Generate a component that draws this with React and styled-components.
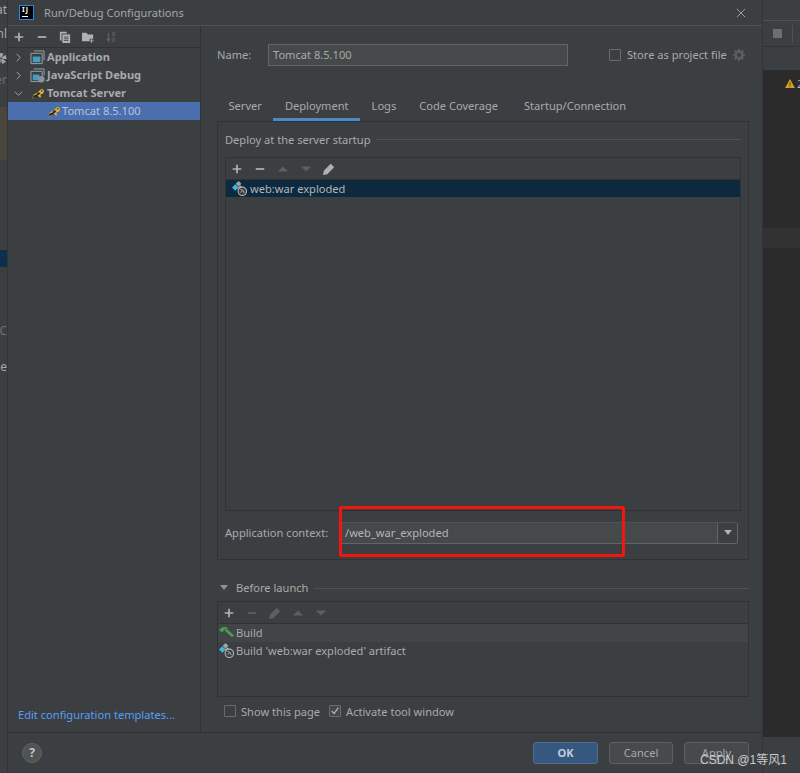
import React from 'react'
import styled, { createGlobalStyle } from 'styled-components'

const GlobalStyle = createGlobalStyle`
html, body {
  margin: 0;
  padding: 0;
  height: 100%;
  overflow: hidden;
  background: #3c3f41;
}
* { box-sizing: border-box; }
`

const Tomcat = () => (
  <IconSvg viewBox="0 0 16 16">
    <path d="M2 13l2-4 4-2 3-3 2-1 2 2-1 3-3 1 1 3-2 0-2-2-3 1-1 2z" fill="#e3ae2a" />
    <path d="M2 13l2-3 3-1 1-2 3 0-1 2-2 1 1 2-2-1-2 1z" fill="#26272a" />
    <circle cx="12.500" cy="5" r=".8" fill="#26272a" />
  </IconSvg>
)

const Artifact = () => (
  <IconSvg viewBox="0 0 16 16">
    <path d="M7 0l3 3-3 3-3-3z" fill="#9aa7b0" />
    <path d="M3.500 3.500l3.500 3.500-3.500 3.500L0 7z" fill="#40b6e0" />
    <path d="M9 4.500l3 3-3 3-3-3z" fill="#9aa7b0" />
    <circle cx="11" cy="11" r="4.500" fill="#3c3f41" stroke="#afb1b3" strokeWidth="1.200" />
    <path d="M9 9l3 1 1 3M9 12l2-1" stroke="#afb1b3" strokeWidth="1" fill="none" />
  </IconSvg>
)

const Pencil = ({ dim }) => (
  <ToolSvg viewBox="0 0 14 14" $dim={dim}>
    <path d="M0 14l1-5 8-8 4 4-8 8z" fill="currentColor" />
  </ToolSvg>
)

const Up = () => (
  <ToolSvg viewBox="0 0 14 14" $dim>
    <path d="M1 10l6-6 6 6z" fill="currentColor" />
  </ToolSvg>
)

const Down = () => (
  <ToolSvg viewBox="0 0 14 14" $dim>
    <path d="M1 4l6 6 6-6z" fill="currentColor" />
  </ToolSvg>
)

const Plus = () => (
  <ToolSvg viewBox="0 0 14 14">
    <path d="M2 7h10M7 2v10" stroke="currentColor" strokeWidth="2" />
  </ToolSvg>
)

const Minus = ({ dim }) => (
  <ToolSvg viewBox="0 0 14 14" $dim={dim}>
    <path d="M2 7h10" stroke="currentColor" strokeWidth="2" />
  </ToolSvg>
)

const App = () => {
  return (
    <Screen>
      <GlobalStyle />
      <LeftStrip>
        <StripText $h={22} $top={1}>at</StripText>
        <StripText $h={25} $top={3}>nl</StripText>
        <StripText $h={23} $top={3}>✿</StripText>
        <StripText $h={37} $top={1} $dim>er</StripText>
        <LeftBrown />
        <LeftGap $h={90} />
        <LeftBlue />
        <LeftGap $h={55} />
        <StripText $h={36} $top={0} $dim>C</StripText>
        <StripText $h={36} $top={0}>ole</StripText>
      </LeftStrip>

      <Dialog>
        <TitleBar>
          <Logo>
            <LogoText>IJ</LogoText>
            <LogoLine />
          </Logo>
          <TitleText>Run/Debug Configurations</TitleText>
          <CloseSvg viewBox="0 0 12 12">
            <path d="M1 1l10 10M11 1L1 11" stroke="#afb1b3" strokeWidth="1" />
          </CloseSvg>
        </TitleBar>

        <Body>
          <Sidebar>
            <SideTools>
              <Plus />
              <Minus />
              <ToolSvg viewBox="0 0 14 14">
                <path d="M1 1h8v2H3v8H1z" fill="currentColor" />
                <path d="M4 4h9v10H4z" fill="currentColor" />
                <path d="M6 7h5M6 9h5M6 11h5" stroke="#3c3f41" />
              </ToolSvg>
              <ToolSvg viewBox="0 0 14 14">
                <path d="M0 2h5l2 2h6v8H0z" fill="currentColor" />
                <path d="M11 9v5M8.500 11.500h5" stroke="#3c3f41" strokeWidth="3" />
                <path d="M11 9v5M8.500 11.500h5" stroke="#afb1b3" />
              </ToolSvg>
              <ToolSvg viewBox="0 0 14 14" $dim>
                <path d="M4 2v9M2 9l2 3 2-3" stroke="currentColor" strokeWidth="1.500" fill="none" />
                <path d="M8 1h4v5H8zM8 8h4v5H8z" fill="currentColor" opacity=".6" />
              </ToolSvg>
            </SideTools>
            <Tree>
              <TreeRow>
                <ArrowSvg viewBox="0 0 10 10"><path d="M3 1l4 4-4 4" stroke="#afb1b3" fill="none" /></ArrowSvg>
                <IconSvg viewBox="0 0 16 16">
                  <path d="M4 1h11v10" stroke="#9aa7b0" fill="none" />
                  <path d="M1 3.500h12v11H1z" stroke="#9aa7b0" fill="none" />
                  <path d="M3 7h8v6H3z" fill="#40a0c0" />
                </IconSvg>
                <TreeLabel>Application</TreeLabel>
              </TreeRow>
              <TreeRow>
                <ArrowSvg viewBox="0 0 10 10"><path d="M3 1l4 4-4 4" stroke="#afb1b3" fill="none" /></ArrowSvg>
                <IconSvg viewBox="0 0 16 16">
                  <path d="M4 1h11v7" stroke="#9aa7b0" fill="none" />
                  <path d="M1 3.500h12v11H1z" stroke="#9aa7b0" fill="none" />
                  <path d="M3 7h7v6H3z" fill="#40a0c0" />
                  <circle cx="12" cy="12" r="3.500" fill="#8c9296" />
                </IconSvg>
                <TreeLabel>JavaScript Debug</TreeLabel>
              </TreeRow>
              <TreeRow>
                <ArrowSvg viewBox="0 0 10 10"><path d="M1 3l4 4 4-4" stroke="#afb1b3" fill="none" /></ArrowSvg>
                <Tomcat />
                <TreeLabel>Tomcat Server</TreeLabel>
              </TreeRow>
              <SelectedRow>
                <Tomcat />
                <SelectedLabel>Tomcat 8.5.100</SelectedLabel>
              </SelectedRow>
            </Tree>
            <TemplatesLink>Edit configuration templates...</TemplatesLink>
          </Sidebar>

          <Main>
            <NameRow>
              <FieldLabel>Name:</FieldLabel>
              <NameInput>Tomcat 8.5.100</NameInput>
              <StoreWrap>
                <CheckBox />
                <CheckLabel>Store as project file</CheckLabel>
                <ToolSvg viewBox="0 0 14 14" $dim>
                  <circle cx="7" cy="7" r="4" fill="none" stroke="currentColor" strokeWidth="3" />
                  <path d="M7 0v3M7 11v3M0 7h3M11 7h3M2 2l2 2M10 10l2 2M12 2l-2 2M2 12l2-2" stroke="currentColor" strokeWidth="2" />
                </ToolSvg>
              </StoreWrap>
            </NameRow>

            <Tabs>
              <Tab>Server</Tab>
              <Tab $active>Deployment</Tab>
              <Tab>Logs</Tab>
              <Tab $extra={3}>Code Coverage</Tab>
              <Tab>Startup/Connection</Tab>
            </Tabs>

            <Panel>
              <GroupTitle>
                <span>Deploy at the server startup</span>
                <GroupLine />
              </GroupTitle>
              <ListBox>
                <ListTools>
                  <Plus />
                  <Minus />
                  <Up />
                  <Down />
                  <Pencil />
                </ListTools>
                <ArtifactRow>
                  <Artifact />
                  <span>web:war exploded</span>
                </ArtifactRow>
              </ListBox>
              <ContextRow>
                <ContextLabel>Application context:</ContextLabel>
                <ContextCombo>
                  <ContextValue>/web_war_exploded</ContextValue>
                  <ComboButton>
                    <ComboArrow viewBox="0 0 8 6"><path d="M0 0h8L4 5z" fill="#afb1b3" /></ComboArrow>
                  </ComboButton>
                </ContextCombo>
              </ContextRow>
            </Panel>

            <BeforeTitle>
              <ComboArrow viewBox="0 0 8 6"><path d="M0 0h8L4 5z" fill="#8c9296" /></ComboArrow>
              <BeforeLabel>Before launch</BeforeLabel>
              <GroupLine />
            </BeforeTitle>
            <BeforeBox>
              <BeforeTools>
                <Plus />
                <Minus dim />
                <Pencil dim />
                <Up />
                <Down />
              </BeforeTools>
              <BeforeRow $first>
                <IconSvg viewBox="0 0 16 16">
                  <path d="M0 5l4-3 4 0 2 2-3 0-4 4z" fill="#499c54" />
                  <path d="M6 6l2-2 8 7-2 2z" fill="#499c54" />
                </IconSvg>
                <span>Build</span>
              </BeforeRow>
              <BeforeRow>
                <Artifact />
                <span>Build 'web:war exploded' artifact</span>
              </BeforeRow>
            </BeforeBox>

            <OptionsRow>
              <CheckBox />
              <OptionText>Show this page</OptionText>
              <CheckBox $checked>
                <svg viewBox="0 0 12 12" width="10" height="10">
                  <path d="M2 6l3 3 5-7" stroke="#afb1b3" strokeWidth="1.600" fill="none" />
                </svg>
              </CheckBox>
              <span>Activate tool window</span>
            </OptionsRow>
          </Main>
        </Body>

        <Footer>
          <HelpButton>?</HelpButton>
          <FooterButtons>
            <Button $primary $w={65}>OK</Button>
            <Button $w={64}>Cancel</Button>
            <Button $w={65}>Apply</Button>
          </FooterButtons>
        </Footer>
      </Dialog>

      <RightStrip>
        <RightTop>
          <RightToolbar>
            <StopSquare />
            <ToolDivider />
          </RightToolbar>
        </RightTop>
        <RightEditor>
          <WarnRow>
            <WarnIcon viewBox="0 0 12 11">
              <path d="M6 0l6 11H0z" fill="#d6a21e" />
              <path d="M6 4v4M6 9v1" stroke="#2b2b2b" />
            </WarnIcon>
            <WarnCount>2</WarnCount>
          </WarnRow>
          <CaretLine />
        </RightEditor>
        <RightBottom />
      </RightStrip>

      <RedBox />
      <Watermark>CSDN @1等风1</Watermark>
    </Screen>
  )
}

export default App

const Screen = styled.div`
position: relative;
width: 800px;
height: 773px;
display: flex;
overflow: hidden;
font-family: "Noto Sans", "Noto Sans CJK SC", sans-serif;
font-size: 11.1px;
color: #a8aaab;
`
const LeftStrip = styled.div`
width: 8px;
flex-shrink: 0;
background: #3c3f41;
display: flex;
flex-direction: column;
overflow: hidden;
border-right: 1px solid #323436;
`
const StripText = styled.div`
height: ${(p) => p.$h}px;
flex-shrink: 0;
padding-top: ${(p) => p.$top}px;
color: ${(p) => (p.$dim ? '#6c6f70' : '#a4a6a8')};
font-size: 12px;
direction: rtl;
white-space: nowrap;
`
const LeftBrown = styled.div`
height: 53px;
flex-shrink: 0;
background: #4a463c;
`
const LeftGap = styled.div`
height: ${(p) => p.$h}px;
flex-shrink: 0;
`
const LeftBlue = styled.div`
height: 17px;
flex-shrink: 0;
background: #0d2f4d;
`
const Dialog = styled.div`
width: 754px;
flex-shrink: 0;
display: flex;
flex-direction: column;
background: #3c3f41;
`
const TitleBar = styled.div`
height: 26px;
display: flex;
align-items: center;
padding: 0 16px 0 11px;
border-bottom: 1px solid #515151;
flex-shrink: 0;
`
const Logo = styled.div`
width: 15px;
height: 15px;
background: #000;
border: 1px solid #1f88e5;
margin-top: -1px;
margin-right: 10px;
flex-shrink: 0;
`
const LogoText = styled.div`
color: #fff;
font-size: 7px;
font-weight: 700;
line-height: 8px;
letter-spacing: 1px;
padding-left: 2px;
`
const LogoLine = styled.div`
width: 6px;
height: 1px;
background: #fff;
margin-left: 2px;
margin-top: 2px;
`
const TitleText = styled.div`
flex: 1;
color: #a4a6a8;
`
const CloseSvg = styled.svg`
width: 10px;
height: 10px;
`
const Body = styled.div`
flex: 1;
display: flex;
min-height: 0;
border-bottom: 1px solid #323232;
`
const Sidebar = styled.div`
width: 193px;
flex-shrink: 0;
display: flex;
flex-direction: column;
border-right: 1px solid #323232;
`
const SideTools = styled.div`
height: 22px;
display: flex;
align-items: center;
gap: 11px;
padding-left: 5px;
border-bottom: 1px solid #323232;
flex-shrink: 0;
`
const ToolSvg = styled.svg`
width: 12px;
height: 12px;
flex-shrink: 0;
color: ${(p) => (p.$dim ? '#5c5f61' : '#afb1b3')};
`
const IconSvg = styled.svg`
width: 15px;
height: 15px;
flex-shrink: 0;
`
const ArrowSvg = styled.svg`
width: 9px;
height: 9px;
margin-right: 7px;
flex-shrink: 0;
`
const Tree = styled.div`
flex: 1;
`
const TreeRow = styled.div`
height: 18px;
display: flex;
align-items: center;
padding-left: 6px;
`
const TreeLabel = styled.span`
margin-left: 2px;
margin-bottom: 1px;
font-weight: 700;
color: #a8aaab;
`
const SelectedRow = styled.div`
height: 18px;
display: flex;
align-items: center;
padding-left: 38px;
background: #4b6eaf;
`
const SelectedLabel = styled.span`
margin-left: 1px;
margin-bottom: 1px;
color: #b8c4d8;
`
const TemplatesLink = styled.div`
color: #589df6;
padding-left: 10px;
margin-bottom: 10px;
line-height: 14px;
`
const Main = styled.div`
flex: 1;
padding: 17px 13px 0 16px;
display: flex;
flex-direction: column;
min-width: 0;
`
const NameRow = styled.div`
display: flex;
align-items: center;
height: 23px;
flex-shrink: 0;
`
const FieldLabel = styled.span`
width: 51px;
`
const NameInput = styled.div`
width: 300px;
height: 22px;
background: #45494a;
border: 1px solid #646464;
padding-left: 4px;
line-height: 19px;
color: #a8aaab;
`
const StoreWrap = styled.div`
display: flex;
align-items: center;
margin-left: 41px;
gap: 6px;
`
const CheckBox = styled.div`
width: 12px;
height: 12px;
border: 1px solid #6b6b6b;
background: ${(p) => (p.$checked ? '#43494a' : 'transparent')};
border-radius: 1px;
display: flex;
align-items: center;
justify-content: center;
flex-shrink: 0;
`
const CheckLabel = styled.span`
white-space: nowrap;
`
const Tabs = styled.div`
margin-top: 30px;
height: 25px;
display: flex;
flex-shrink: 0;
`
const Tab = styled.div`
height: 25px;
padding: 0 11.5px;
margin-right: ${(p) => p.$extra || 0}px;
line-height: 19px;
white-space: nowrap;
border-bottom: 3px solid ${(p) => (p.$active ? '#4a88c7' : 'transparent')};
`
const Panel = styled.div`
height: 439px;
border: 1px solid #323232;
padding: 9px 7px 0 7px;
flex-shrink: 0;
display: flex;
flex-direction: column;
`
const GroupTitle = styled.div`
height: 16px;
display: flex;
align-items: center;
gap: 5px;
flex-shrink: 0;
white-space: nowrap;
`
const GroupLine = styled.div`
flex: 1;
height: 1px;
background: #515151;
`
const ListBox = styled.div`
margin-top: 10px;
height: 354px;
border: 1px solid #323232;
flex-shrink: 0;
`
const ListTools = styled.div`
height: 22px;
display: flex;
align-items: center;
gap: 11px;
padding-left: 5px;
border-bottom: 1px solid #323232;
`
const ArtifactRow = styled.div`
height: 17px;
display: flex;
align-items: center;
gap: 3px;
padding-left: 6px;
padding-bottom: 1px;
background: #0d293e;
color: #b4b6b8;
`
const ContextRow = styled.div`
margin-top: 11px;
display: flex;
align-items: center;
height: 22px;
white-space: nowrap;
`
const ContextLabel = styled.span`
margin-bottom: 2px;
`
const ContextCombo = styled.div`
margin-left: auto;
margin-right: 3px;
width: 398px;
height: 22px;
flex-shrink: 0;
display: flex;
border: 1px solid #646464;
border-top-color: #4f5254;
background: #45494a;
border-radius: 0 2px 2px 0;
`
const ContextValue = styled.div`
flex: 1;
padding-left: 4px;
line-height: 20px;
color: #b4b6b8;
`
const ComboButton = styled.div`
width: 20px;
background: #3c3f41;
border-left: 1px solid #646464;
display: flex;
align-items: center;
justify-content: center;
`
const ComboArrow = styled.svg`
width: 8px;
height: 6px;
flex-shrink: 0;
`
const BeforeTitle = styled.div`
margin-top: 20px;
height: 16px;
display: flex;
align-items: center;
padding-left: 3px;
flex-shrink: 0;
white-space: nowrap;
`
const BeforeLabel = styled.span`
margin-left: 8px;
margin-right: 6px;
margin-bottom: 1px;
`
const BeforeBox = styled.div`
margin-top: 5px;
height: 96px;
border: 1px solid #323232;
flex-shrink: 0;
`
const BeforeTools = styled.div`
height: 22px;
display: flex;
align-items: center;
gap: 11px;
padding-left: 5px;
border-bottom: 1px solid #323232;
`
const BeforeRow = styled.div`
height: 18px;
display: flex;
align-items: center;
gap: 2px;
padding-left: 1px;
padding-bottom: 1px;
background: ${(p) => (p.$first ? '#424547' : 'transparent')};
`
const OptionsRow = styled.div`
margin-top: 6px;
margin-left: 7px;
display: flex;
align-items: center;
gap: 5px;
height: 16px;
white-space: nowrap;
`
const OptionText = styled.span`
margin-right: 4px;
`
const Footer = styled.div`
height: 40px;
flex-shrink: 0;
display: flex;
align-items: flex-start;
justify-content: space-between;
padding: 10px 0 0 14px;
`
const HelpButton = styled.div`
width: 20px;
height: 20px;
border-radius: 50%;
background: #505354;
border: 1px solid #5f6263;
color: #c4c6c8;
font-weight: 700;
font-size: 12px;
line-height: 18px;
text-align: center;
`
const FooterButtons = styled.div`
display: flex;
gap: 11px;
padding-right: 13px;
margin-top: -1px;
`
const Button = styled.div`
width: ${(p) => p.$w}px;
height: 22px;
border-radius: 3px;
text-align: center;
line-height: 20px;
border: 1px solid ${(p) => (p.$primary ? '#4c708c' : '#5e6060')};
background: ${(p) => (p.$primary ? '#365880' : '#47494b')};
color: ${(p) => (p.$primary ? '#c0ccd8' : '#a8aaab')};
font-weight: ${(p) => (p.$primary ? 700 : 400)};
`
const RightStrip = styled.div`
flex: 1;
display: flex;
flex-direction: column;
min-width: 0;
overflow: hidden;
border-left: 1px solid #323436;
`
const RightTop = styled.div`
height: 70px;
flex-shrink: 0;
background: #3c3f41;
padding-top: 20px;
`
const RightToolbar = styled.div`
height: 27px;
border-top: 1px solid #515151;
border-bottom: 1px solid #323232;
display: flex;
align-items: center;
padding-left: 10px;
gap: 10px;
`
const StopSquare = styled.div`
width: 9px;
height: 9px;
flex-shrink: 0;
background: #6e6e6e;
`
const ToolDivider = styled.div`
width: 1px;
height: 18px;
flex-shrink: 0;
background: #515151;
`
const RightEditor = styled.div`
flex: 1;
background: #2b2b2b;
display: flex;
flex-direction: column;
`
const WarnRow = styled.div`
margin-top: 7px;
display: flex;
align-items: center;
padding-left: 22px;
gap: 2px;
height: 12px;
`
const WarnIcon = styled.svg`
width: 10px;
height: 9px;
flex-shrink: 0;
`
const WarnCount = styled.span`
color: #a9b7c6;
font-size: 11px;
`
const CaretLine = styled.div`
margin-top: 139px;
height: 20px;
background: #323232;
`
const RightBottom = styled.div`
height: 36px;
flex-shrink: 0;
background: #3c3f41;
`
const RedBox = styled.div`
position: absolute;
left: 339px;
top: 506px;
width: 286px;
height: 51px;
border: 3px solid #f5150f;
border-radius: 2px;
`
const Watermark = styled.div`
position: absolute;
left: 700px;
top: 750px;
font-family: "Liberation Sans", "Noto Sans CJK SC", sans-serif;
font-size: 12px;
color: #c8cacb;
white-space: nowrap;
`
